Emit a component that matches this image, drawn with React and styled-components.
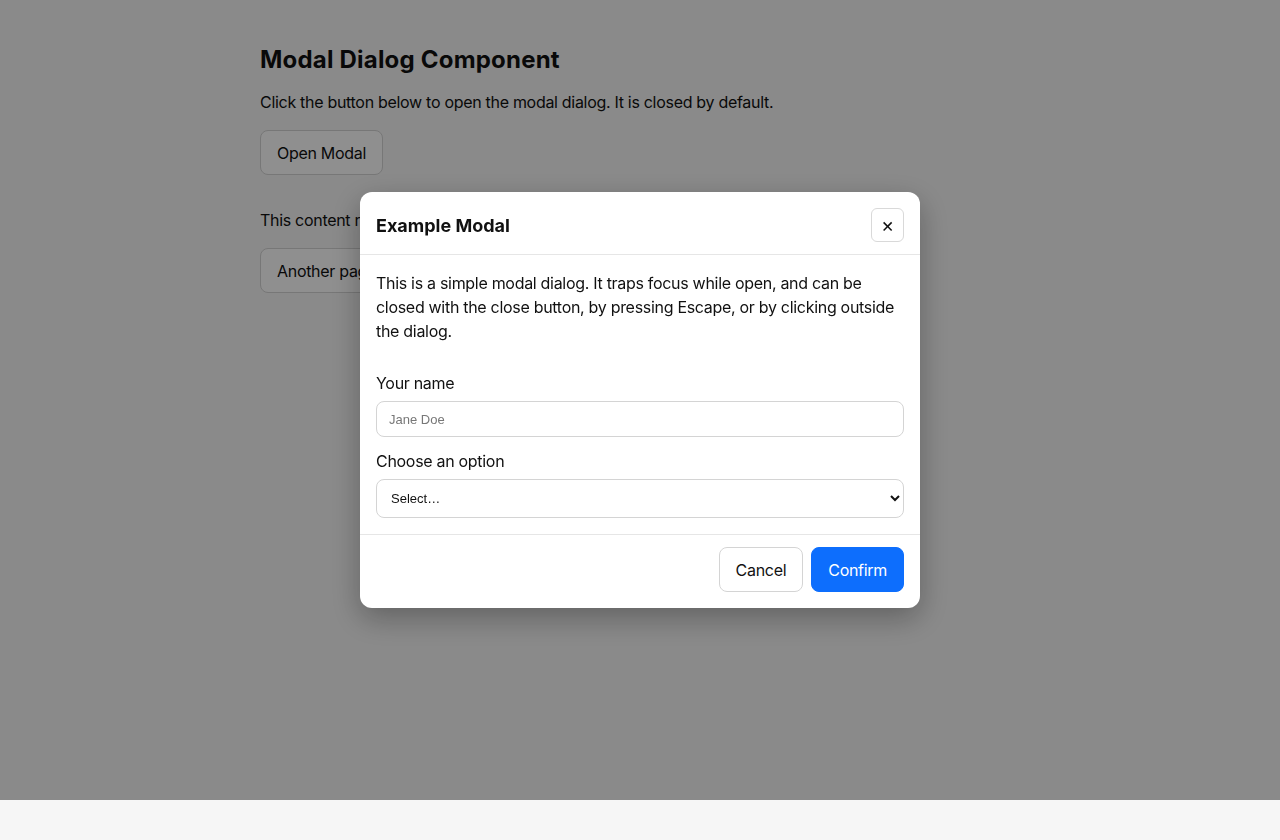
import React, { useState } from 'react'
import styled, { createGlobalStyle } from 'styled-components'

const GlobalStyle = createGlobalStyle`
  html, body {
    margin: 0;
    padding: 0;
    background: #f6f6f6;
    color: #111;
    font-family: Inter, "Noto Sans", sans-serif;
  }
`

export default function App() {
  const [open, setOpen] = useState(true)
  return (
    <>
      <GlobalStyle />
      <Page>
        <Title>Modal Dialog Component</Title>
        <Text>Click the button below to open the modal dialog. It is closed by default.</Text>
        <Button onClick={() => setOpen(true)}>Open Modal</Button>
        <Section>
          <Text>This content remains behind the modal while it is open.</Text>
          <Button>Another page button</Button>
        </Section>
      </Page>
      {open && (
        <Overlay onClick={() => setOpen(false)}>
          <Dialog role="dialog" aria-modal="true" onClick={(e) => e.stopPropagation()}>
            <Header>
              <DialogTitle>Example Modal</DialogTitle>
              <CloseButton aria-label="Close" onClick={() => setOpen(false)}>×</CloseButton>
            </Header>
            <Body>
              <Intro>
                This is a simple modal dialog. It traps focus while open, and can be closed with the
                close button, by pressing Escape, or by clicking outside the dialog.
              </Intro>
              <Field>
                <Label htmlFor="name">Your name</Label>
                <Input id="name" placeholder="Jane Doe" />
              </Field>
              <Field>
                <Label htmlFor="opt">Choose an option</Label>
                <Select id="opt" defaultValue="">
                  <option value="">Select…</option>
                  <option value="a">Option A</option>
                  <option value="b">Option B</option>
                </Select>
              </Field>
            </Body>
            <Footer>
              <Button onClick={() => setOpen(false)}>Cancel</Button>
              <Button primary onClick={() => setOpen(false)}>Confirm</Button>
            </Footer>
          </Dialog>
        </Overlay>
      )}
    </>
  )
}

const Page = styled.div`
  width: 760px;
  margin: 0 auto;
  padding: 44px 0 0;
  height: 796px;
  box-sizing: border-box;
`

const Title = styled.h1`
  margin: 0 0 14px;
  font-size: 24px;
  line-height: 32px;
  font-weight: 700;
  letter-spacing: 0.2px;
`

const Text = styled.p`
  margin: 0 0 16px;
  font-size: 16px;
  line-height: 24px;
  letter-spacing: -0.3px;
`

const Section = styled.div`
  margin-top: 33px;
`

const Button = styled.button`
  font-family: inherit;
  font-size: 16px;
  letter-spacing: -0.3px;
  height: 45px;
  padding: 0 16px;
  border-radius: 8px;
  border: 1px solid ${(p) => (p.primary ? '#0d6efd' : '#d4d4d4')};
  background: ${(p) => (p.primary ? '#0d6efd' : '#fff')};
  color: ${(p) => (p.primary ? '#fff' : '#111')};
  cursor: pointer;
`

const Overlay = styled.div`
  position: fixed;
  top: 0;
  left: 0;
  right: 0;
  height: 800px;
  background: rgba(0, 0, 0, 0.44);
  display: flex;
  justify-content: center;
  align-items: flex-start;
  padding-top: 192px;
  box-sizing: border-box;
`

const Dialog = styled.div`
  width: 560px;
  background: #fff;
  border-radius: 12px;
  box-shadow: 0 10px 30px rgba(0, 0, 0, 0.3);
  overflow: hidden;
`

const Header = styled.div`
  display: flex;
  align-items: center;
  justify-content: space-between;
  padding: 16px 16px 12px;
  border-bottom: 1px solid #e6e6e6;
`

const DialogTitle = styled.h2`
  margin: 2px 0 0;
  font-size: 18px;
  line-height: 24px;
  font-weight: 700;
`

const CloseButton = styled.button`
  width: 33px;
  height: 34px;
  padding: 0;
  border: 1px solid #d9d9d9;
  border-radius: 6px;
  background: #fff;
  color: #111;
  font-size: 20px;
  line-height: 1;
  font-family: inherit;
  cursor: pointer;
`

const Body = styled.div`
  padding: 16px;
  display: flex;
  flex-direction: column;
  gap: 12px;
`

const Intro = styled.p`
  margin: 0 0 16px;
  font-size: 16px;
  line-height: 24px;
  letter-spacing: -0.3px;
`

const Field = styled.div`
  display: flex;
  flex-direction: column;
  gap: 6px;
`

const Label = styled.label`
  font-size: 16px;
  line-height: 24px;
  letter-spacing: -0.3px;
`

const Input = styled.input`
  height: 36px;
  box-sizing: border-box;
  padding: 0 12px;
  border: 1px solid #d4d4d4;
  border-radius: 8px;
  font-size: 13px;
  font-family: "Liberation Sans", Arial, sans-serif;
  &::placeholder {
    color: #777;
  }
`

const Select = styled.select`
  height: 39px;
  box-sizing: border-box;
  padding: 0 10px;
  border: 1px solid #d4d4d4;
  border-radius: 8px;
  background: #fff;
  font-size: 13px;
  font-family: "Liberation Sans", Arial, sans-serif;
  color: #111;
`

const Footer = styled.div`
  display: flex;
  justify-content: flex-end;
  gap: 8px;
  padding: 12px 16px 16px;
  border-top: 1px solid #e6e6e6;
`
